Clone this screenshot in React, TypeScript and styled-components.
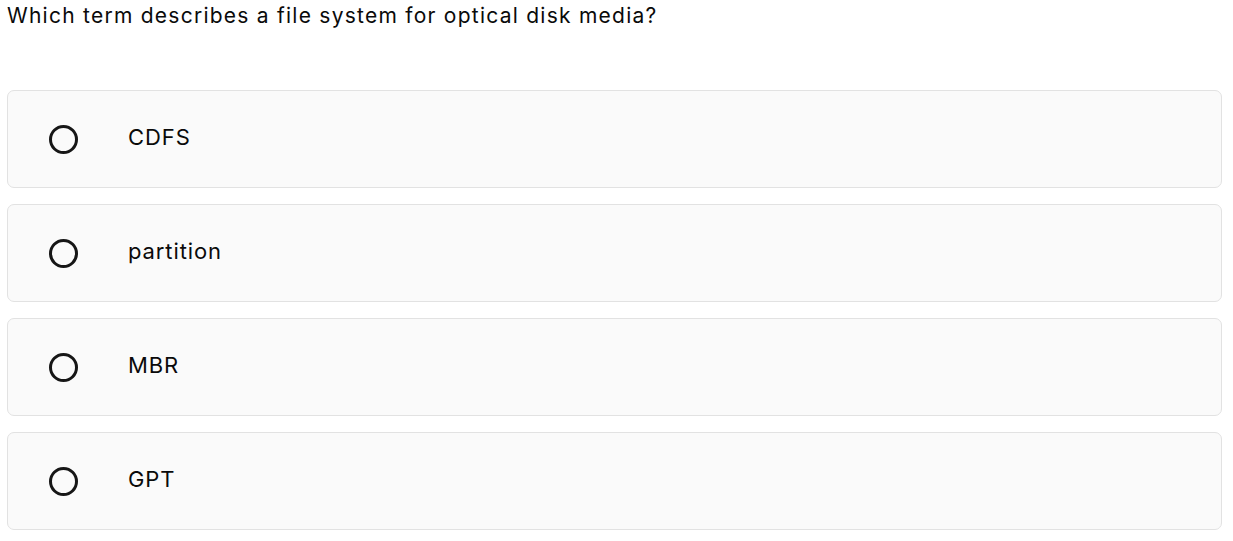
import React from 'react'
import styled, { createGlobalStyle } from 'styled-components'

const GlobalStyle = createGlobalStyle`
  body {
    margin: 0;
    background: #fff;
    font-family: Inter, 'Liberation Sans', sans-serif;
    color: #0a0a0a;
  }
`

const options = ['CDFS', 'partition', 'MBR', 'GPT']

const App = () => {
  return (
    <>
      <GlobalStyle />
      <Wrapper>
        <Question>Which term describes a file system for optical disk media?</Question>
        <OptionList>
          {options.map(option => (
            <Option key={option}>
              <Radio />
              <Label>{option}</Label>
            </Option>
          ))}
        </OptionList>
      </Wrapper>
    </>
  )
}

const Wrapper = styled.main`
  padding: 0 11px 0 7px;
`

const Question = styled.h1`
  margin: 0;
  padding-top: 3px;
  font-size: 21px;
  font-weight: 400;
  line-height: 26px;
  letter-spacing: 1.25px;
  color: #0a0a0a;
`

const OptionList = styled.div`
  margin-top: 61px;
  display: flex;
  flex-direction: column;
  gap: 16px;
`

const Option = styled.div`
  height: 98px;
  box-sizing: border-box;
  display: flex;
  align-items: center;
  padding-left: 41px;
  background: #fafafa;
  border: 1px solid #e2e2e2;
  border-radius: 7px;
`

const Radio = styled.span`
  width: 29px;
  height: 29px;
  box-sizing: border-box;
  border: 3px solid #161616;
  border-radius: 50%;
  flex-shrink: 0;
`

const Label = styled.span`
  margin-left: 50px;
  margin-top: -4px;
  font-size: 22px;
  letter-spacing: 0.9px;
  color: #0a0a0a;
`

export default App
